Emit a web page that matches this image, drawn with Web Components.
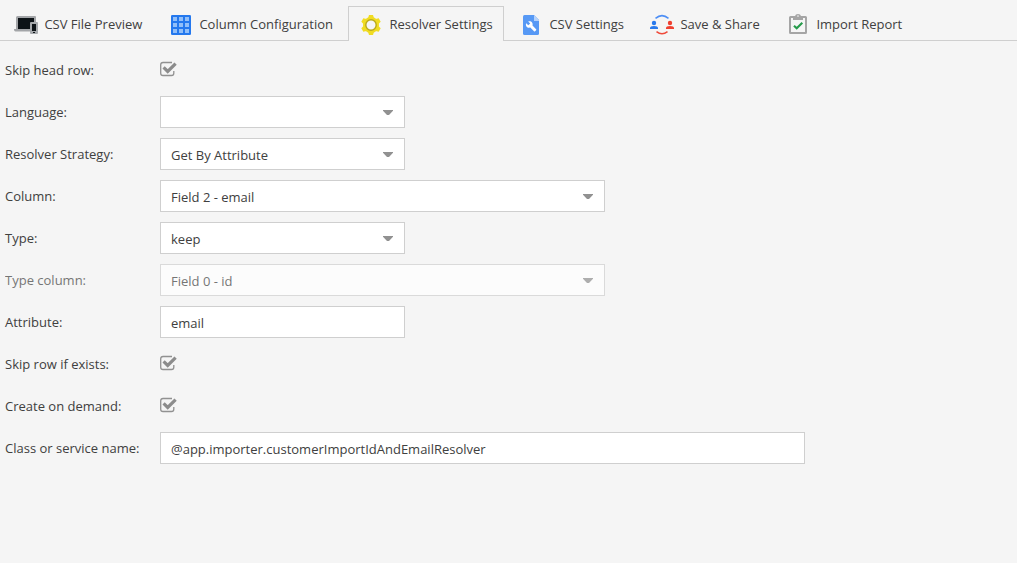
<!DOCTYPE html>
<html lang="en">
<head>
<meta charset="utf-8">
<title>Resolver Settings</title>
<style>
html, body { margin: 0; height: 100%; background: #f5f5f5; overflow: hidden; }
body { font: 13px/17px "Open Sans", "Noto Sans", sans-serif; color: #404040; }
</style>
</head>
<body>
<import-panel></import-panel>
<script>
const ICONS = {
  devices: '<path fill="#a3a5a8" d="M3.500 3h17.500q1 0 1 1v14.500H1.500Q0 18.500 0 16.500V16h2V4.500Q2 3 3.500 3z"/><path fill="#0d1317" d="M4 5h16v11H4z"/><path fill="#a6a9ac" d="M17 9h6q1 0 1 1v10q0 1-1 1h-6q-1 0-1-1V10q0-1 1-1z"/><path fill="#0d1317" d="M18 11h4v7h-4zM19 19h2v1h-2z"/>',
  grid: '<rect x="2" y="2" width="20" height="20" rx="1.3" fill="#2478ee"/><path fill="#91bff9" d="M4 4h4v4H4zM10 4h4v4h-4zM16 4h4v4h-4zM4 10h4v4H4zM10 10h4v4h-4zM16 10h4v4h-4zM4 16h4v4H4zM10 16h4v4h-4zM16 16h4v4h-4z"/>',
  gear: '<g fill="#f0dc22"><circle cx="12" cy="12" r="8"/><path id="t" d="M10 2h4l1.200 4v12L14 22h-4l-1.200-4V6z"/><path d="M10 2h4l1.200 4v12L14 22h-4l-1.200-4V6z" transform="rotate(60 12 12)"/><path d="M10 2h4l1.200 4v12L14 22h-4l-1.200-4V6z" transform="rotate(120 12 12)"/></g><circle cx="12" cy="12" r="5.2" fill="#f5f5f5" stroke="#b9a91a" stroke-width="1.400"/>',
  document: '<path fill="#5799f5" d="M5.5 2H15l5 5v13.5q0 1.5-1.5 1.5h-13Q4 22 4 20.5v-17Q4 2 5.5 2z"/><path fill="#b5d2fb" d="M15 2l5 5v1h-5z"/><path fill="#fff" d="M7.2 9.2l2.1 2.1 1.9-1.8-2-2c2.8-1 5.1 1.2 4.3 4l3.6 3.7q.5.6 0 1.1l-1 1q-.6.5-1.1 0l-3.7-3.7c-3 .8-5.2-1.8-4.1-4.4z" transform="translate(0 1)"/>',
  share: '<path fill="none" stroke="#4d8ef5" stroke-width="1.5" d="M5.5 5.3q6.5-5.4 13 0"/><path fill="none" stroke="#ef4b3b" stroke-width="1.5" d="M6.5 18.700q5.5 4.300 11 0"/><g fill="#2879ec"><circle cx="4" cy="10" r="2.2"/><path d="M0 16v-1q0-2 4-2t4 2v1z"/></g><g fill="#ef4030"><circle cx="20" cy="10" r="2.2"/><path d="M16 16v-1q0-2 4-2t4 2v1z"/></g>',
  report: '<path fill="#a5a5a5" fill-rule="evenodd" d="M4.5 3H9q.5-2 3-2t3 2h4.500q1.500 0 1.500 1.500v15q0 1.500-1.500 1.500h-15Q3 21 3 19.500v-15Q3 3 4.500 3zM5 5v14h14V5h-2v2H7V5zM12 2.300a.8.800 0 1 0 0 1.600.8.800 0 0 0 0-1.600z"/><path fill="none" stroke="#259b4a" stroke-width="2.100" d="M8 12.700l2.700 2.600L16.300 9.800"/>'
};

class ImportTab extends HTMLElement {
  constructor() {
    super();
    this.attachShadow({ mode: 'open' }).innerHTML = `
      <style>
        :host { display: flex; align-items: center; box-sizing: border-box; height: 35px;
          padding: 1px 10px 0; border: 1px solid transparent; border-bottom: 0; white-space: nowrap; flex: none; }
        :host([active]) { border-color: #cfcfcf; background: #f5f5f5; }
        svg { width: 24px; height: 24px; margin-right: 6.4px; flex: none; }
      </style>
      <svg viewBox="0 0 24 24">${ICONS[this.getAttribute('icon')]}</svg><slot></slot>`;
    this.style.width = this.getAttribute('width') + 'px';
  }
}
customElements.define('import-tab', ImportTab);

class TabBar extends HTMLElement {
  constructor() {
    super();
    this.attachShadow({ mode: 'open' }).innerHTML = `
      <style>
        :host { display: flex; gap: 4px; box-sizing: border-box; height: 41px; padding: 6px 3px 0;
          background: linear-gradient(#cfcfcf, #cfcfcf) bottom / 100% 1px no-repeat; }
      </style><slot></slot>`;
  }
}
customElements.define('tab-bar', TabBar);

class FormRow extends HTMLElement {
  constructor() {
    super();
    this.attachShadow({ mode: 'open' }).innerHTML = `
      <style>
        :host { display: grid; grid-template-columns: 155px auto; justify-content: start; align-items: center; height: 32px; }
        :host([disabled]) { opacity: .7; }
      </style>
      <span>${this.getAttribute('label')}</span><slot></slot>`;
  }
}
customElements.define('form-row', FormRow);

class FieldBox extends HTMLElement {
  constructor() {
    super();
    this.attachShadow({ mode: 'open' }).innerHTML = `
      <style>
        :host { display: flex; align-items: center; justify-content: space-between; box-sizing: border-box;
          height: 32px; border: 1px solid #cfcfcf; background: #fff; padding: 2px 11px 0 10px; }
        svg { width: 10px; height: 5px; margin-top: -1px; }
      </style>
      <span><slot></slot></span>${this.hasAttribute('select') ? '<svg viewBox="0 0 10 5"><path fill="#919191" d="M0 0h10v.7L6 5H4L0 .7z"/></svg>' : ''}`;
    this.style.width = this.getAttribute('width') + 'px';
  }
}
customElements.define('field-box', FieldBox);

class CheckBox extends HTMLElement {
  constructor() {
    super();
    this.attachShadow({ mode: 'open' }).innerHTML = `
      <style>:host { display: block; height: 16px; margin-top: -2px; } svg { display: block; }</style>
      <svg width="18" height="16" viewBox="0 0 18 16">
        <path d="M12 1.500H3Q.7 1.500.7 3.800v8.400q0 2.300 2.300 2.300h8.500q2.300 0 2.300-2.300V10" fill="none" stroke="#919191" stroke-width="1.300"/>
        <path d="M3.600 6.400l4.100 4.100 7.900-7.900" fill="none" stroke="#8c8c8c" stroke-width="3.200"/>
      </svg>`;
  }
}
customElements.define('check-box', CheckBox);

class ImportPanel extends HTMLElement {
  constructor() {
    super();
    this.attachShadow({ mode: 'open' }).innerHTML = `
      <style>
        :host { display: block; }
        main { display: flex; flex-direction: column; gap: 10px; padding: 13px 5px; }
      </style>
      <tab-bar>
        <import-tab icon="devices" width="151">CSV File Preview</import-tab>
        <import-tab icon="grid" width="186">Column Configuration</import-tab>
        <import-tab icon="gear" width="156" active>Resolver Settings</import-tab>
        <import-tab icon="document" width="127">CSV Settings</import-tab>
        <import-tab icon="share" width="132">Save &amp; Share</import-tab>
        <import-tab icon="report" width="140">Import Report</import-tab>
      </tab-bar>
      <main>
        <form-row label="Skip head row:"><check-box></check-box></form-row>
        <form-row label="Language:"><field-box select width="245"></field-box></form-row>
        <form-row label="Resolver Strategy:"><field-box select width="245">Get By Attribute</field-box></form-row>
        <form-row label="Column:"><field-box select width="445">Field 2 - email</field-box></form-row>
        <form-row label="Type:"><field-box select width="245">keep</field-box></form-row>
        <form-row label="Type column:" disabled><field-box select width="445">Field 0 - id</field-box></form-row>
        <form-row label="Attribute:"><field-box width="245">email</field-box></form-row>
        <form-row label="Skip row if exists:"><check-box></check-box></form-row>
        <form-row label="Create on demand:"><check-box></check-box></form-row>
        <form-row label="Class or service name:"><field-box width="645">@app.importer.customerImportIdAndEmailResolver</field-box></form-row>
      </main>`;
  }
}
customElements.define('import-panel', ImportPanel);
</script>
</body>
</html>
